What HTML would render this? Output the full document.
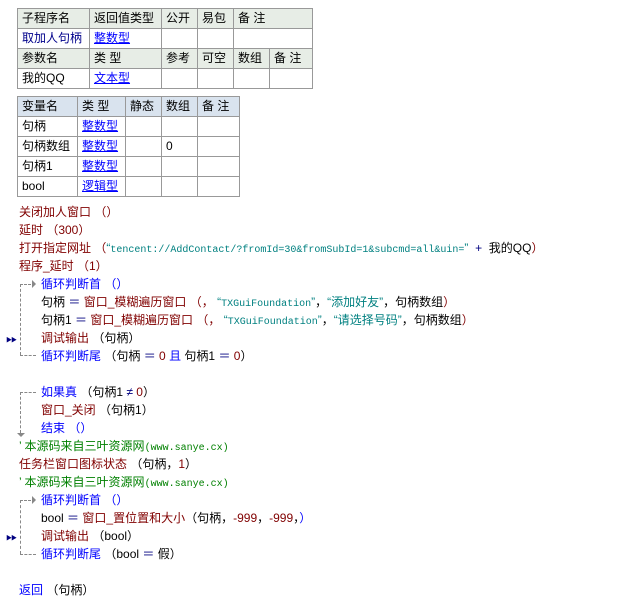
<!DOCTYPE html>
<html><head><meta charset="utf-8"><style>
body{margin:0;background:#fff;width:632px;height:605px;position:relative;overflow:hidden;font-family:"Liberation Sans","Noto Sans CJK SC",sans-serif;font-size:12px;color:#000}
table{position:absolute;border-collapse:collapse;font-size:12px}
td{border:1px solid #999;height:19px;padding:0 0 0 4px;white-space:nowrap;line-height:19px}
.h1 td{background:#e7ede6}
.h2 td{background:#d9e3ee}
a{color:#0000ff;text-decoration:underline}
.n{color:#00008b}
.l{position:absolute;height:18px;line-height:18px;white-space:pre}
.r{color:#800000}.b{color:#0000ff}.t{color:#008080;font-family:"Liberation Mono","Noto Sans CJK SC",monospace;font-size:10px}.tc{color:#008080}.g{color:#008000}.nb{color:#000080}
.v{position:absolute;border-left:1px dashed #888;width:0}
.hz{position:absolute;border-top:1px dashed #888;height:0}
.ar{position:absolute;width:0;height:0}
.mk{position:absolute;color:#000080;font-size:6px;left:6px;letter-spacing:-1px}
</style></head><body>
<table style="left:17px;top:8px;width:296px">
<tr class="h1"><td style="width:67px">子程序名</td><td style="width:67px">返回值类型</td><td style="width:31px">公开</td><td style="width:31px">易包</td><td colspan="2">备 注</td></tr>
<tr><td class="n">取加人句柄</td><td><a>整数型</a></td><td></td><td></td><td colspan="2"></td></tr>
<tr class="h1"><td>参数名</td><td>类 型</td><td>参考</td><td>可空</td><td style="width:31px">数组</td><td>备 注</td></tr>
<tr><td>我的QQ</td><td><a>文本型</a></td><td></td><td></td><td></td><td></td></tr>
</table>
<table style="left:17px;top:96px;width:223px">
<tr class="h2"><td style="width:55px">变量名</td><td style="width:43px">类 型</td><td style="width:31px">静态</td><td style="width:31px">数组</td><td>备 注</td></tr>
<tr><td>句柄</td><td><a>整数型</a></td><td></td><td></td><td></td></tr>
<tr><td>句柄数组</td><td><a>整数型</a></td><td></td><td>0</td><td></td></tr>
<tr><td>句柄1</td><td><a>整数型</a></td><td></td><td></td><td></td></tr>
<tr><td>bool</td><td><a>逻辑型</a></td><td></td><td></td><td></td></tr>
</table>

<div class="l r" style="left:19px;top:203px">关闭加人窗口 （）</div>
<div class="l r" style="left:19px;top:221px">延时 （300）</div>
<div class="l r" style="left:19px;top:239px">打开指定网址 （<span class="tc">“</span><span class="t">tencent://AddContact/?fromId=30&amp;fromSubId=1&amp;subcmd=all&amp;uin=</span><span class="tc">”</span>  <span class="nb">+</span>  <span style="color:#000">我的QQ</span>）</div>
<div class="l r" style="left:19px;top:257px">程序_延时 （1）</div>
<div class="l b" style="left:41px;top:275px">循环判断首 （）</div>
<div class="l" style="left:41px;top:293px">句柄 <span class="nb">＝</span> <span class="r">窗口_模糊遍历窗口 （，</span> <span class="tc">“</span><span class="t">TXGuiFoundation</span><span class="tc">”</span>，<span class="tc">“添加好友”</span>，句柄数组<span class="r">）</span></div>
<div class="l" style="left:41px;top:311px">句柄1 <span class="nb">＝</span> <span class="r">窗口_模糊遍历窗口 （，</span> <span class="tc">“</span><span class="t">TXGuiFoundation</span><span class="tc">”</span>，<span class="tc">“请选择号码”</span>，句柄数组<span class="r">）</span></div>
<div class="l r" style="left:41px;top:329px">调试输出 <span style="color:#000">（句柄）</span></div>
<div class="l b" style="left:41px;top:347px">循环判断尾 <span style="color:#000">（句柄 <span class="nb">＝</span> <span class="r">0</span> <span class="b">且</span> 句柄1 <span class="nb">＝</span> <span class="r">0</span>）</span></div>
<div class="l b" style="left:41px;top:383px">如果真 <span style="color:#000">（句柄1 <span class="nb">≠</span> <span class="r">0</span>）</span></div>
<div class="l r" style="left:41px;top:401px">窗口_关闭 <span style="color:#000">（句柄1）</span></div>
<div class="l b" style="left:41px;top:419px">结束 （）</div>
<div class="l g" style="left:19px;top:437px">’ 本源码来自三叶资源网<span class="t" style="color:#008000">(www.sanye.cx)</span></div>
<div class="l r" style="left:19px;top:455px">任务栏窗口图标状态 <span style="color:#000">（句柄，</span>1<span style="color:#000">）</span></div>
<div class="l g" style="left:19px;top:473px">’ 本源码来自三叶资源网<span class="t" style="color:#008000">(www.sanye.cx)</span></div>
<div class="l b" style="left:41px;top:491px">循环判断首 （）</div>
<div class="l" style="left:41px;top:509px">bool <span class="nb">＝</span> <span class="r">窗口_置位置和大小</span>（句柄，<span class="r">-999</span>，<span class="r">-999</span>，<span class="b">）</span></div>
<div class="l r" style="left:41px;top:527px">调试输出 <span style="color:#000">（bool）</span></div>
<div class="l b" style="left:41px;top:545px">循环判断尾 <span style="color:#000">（bool <span class="nb">＝</span> 假）</span></div>
<div class="l b" style="left:19px;top:581px">返回 <span style="color:#000">（句柄）</span></div>

<div class="v" style="left:20px;top:284px;height:71px"></div>
<div class="hz" style="left:20px;top:284px;width:11px"></div>
<div class="ar" style="left:32px;top:280px;border-left:4px solid #888;border-top:4px solid transparent;border-bottom:4px solid transparent"></div>
<div class="hz" style="left:20px;top:355px;width:16px"></div>
<div class="mk" style="top:335px">▶▶</div>

<div class="v" style="left:20px;top:392px;height:41px"></div>
<div class="hz" style="left:20px;top:392px;width:16px"></div>
<div class="ar" style="left:17px;top:433px;border-top:4px solid #888;border-left:4px solid transparent;border-right:4px solid transparent"></div>

<div class="v" style="left:20px;top:500px;height:54px"></div>
<div class="hz" style="left:20px;top:500px;width:11px"></div>
<div class="ar" style="left:32px;top:496px;border-left:4px solid #888;border-top:4px solid transparent;border-bottom:4px solid transparent"></div>
<div class="hz" style="left:20px;top:554px;width:16px"></div>
<div class="mk" style="top:533px">▶▶</div>
</body></html>
